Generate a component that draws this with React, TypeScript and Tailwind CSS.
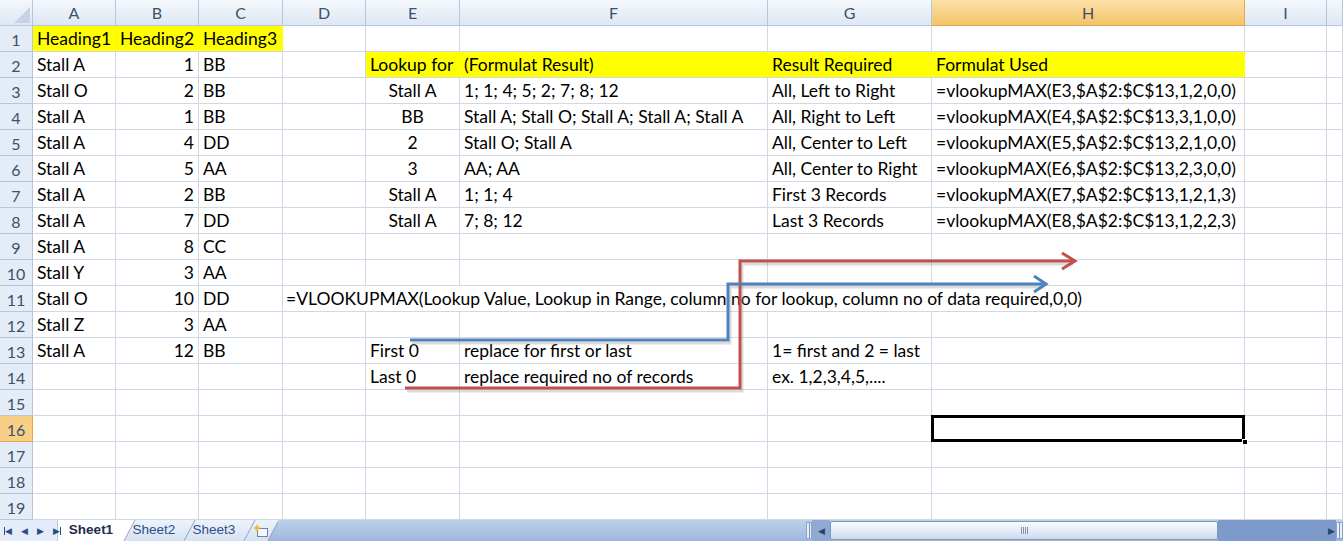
import React from "react";

type Cell = { t: string; al?: "l" | "r" | "c"; y?: boolean };
type Row = Record<string, Cell>;

const COLS = ["A", "B", "C", "D", "E", "F", "G", "H", "I", "J"];

const s = (t: string, al: "l" | "r" | "c" = "l", y = false): Cell => ({ t, al, y });

const rows: Row[] = [
    { A: s("Heading1", "l", true), B: s("Heading2", "l", true), C: s("Heading3", "l", true) },
    { A: s("Stall A"), B: s("1", "r"), C: s("BB"), E: s("Lookup for", "l", true), F: s("(Formulat Result)", "l", true), G: s("Result Required", "l", true), H: s("Formulat Used", "l", true) },
    { A: s("Stall O"), B: s("2", "r"), C: s("BB"), E: s("Stall A", "c"), F: s("1; 1; 4; 5; 2; 7; 8; 12"), G: s("All, Left to Right"), H: s("=vlookupMAX(E3,$A$2:$C$13,1,2,0,0)") },
    { A: s("Stall A"), B: s("1", "r"), C: s("BB"), E: s("BB", "c"), F: s("Stall A; Stall O; Stall A; Stall A; Stall A"), G: s("All, Right to Left"), H: s("=vlookupMAX(E4,$A$2:$C$13,3,1,0,0)") },
    { A: s("Stall A"), B: s("4", "r"), C: s("DD"), E: s("2", "c"), F: s("Stall O; Stall A"), G: s("All, Center to Left"), H: s("=vlookupMAX(E5,$A$2:$C$13,2,1,0,0)") },
    { A: s("Stall A"), B: s("5", "r"), C: s("AA"), E: s("3", "c"), F: s("AA; AA"), G: s("All, Center to Right"), H: s("=vlookupMAX(E6,$A$2:$C$13,2,3,0,0)") },
    { A: s("Stall A"), B: s("2", "r"), C: s("BB"), E: s("Stall A", "c"), F: s("1; 1; 4"), G: s("First 3 Records"), H: s("=vlookupMAX(E7,$A$2:$C$13,1,2,1,3)") },
    { A: s("Stall A"), B: s("7", "r"), C: s("DD"), E: s("Stall A", "c"), F: s("7; 8; 12"), G: s("Last 3 Records"), H: s("=vlookupMAX(E8,$A$2:$C$13,1,2,2,3)") },
    { A: s("Stall A"), B: s("8", "r"), C: s("CC") },
    { A: s("Stall Y"), B: s("3", "r"), C: s("AA") },
    { A: s("Stall O"), B: s("10", "r"), C: s("DD") },
    { A: s("Stall Z"), B: s("3", "r"), C: s("AA") },
    { A: s("Stall A"), B: s("12", "r"), C: s("BB"), E: s("First 0"), F: s("replace for first or last"), G: s("1= first and 2 = last") },
    { E: s("Last 0"), F: s("replace required no of records"), G: s("ex. 1,2,3,4,5,....") },
    {},
    {},
    {},
    {},
    {},
];

const font = "font-['Lato','Open_Sans',sans-serif]";

function ColHead({ label, active }: { label: string; active?: boolean }) {
    return (
        <div
            className={`flex items-center justify-center border-r border-b text-[16px] text-[#3f5069] ${
                active
                    ? "bg-gradient-to-b from-[#fbe0a8] to-[#f4c468] border-[#e1a94a]"
                    : "bg-gradient-to-b from-[#f5f8fc] to-[#dde7f3] border-[#b6c7dd]"
            }`}
        >
            {label}
        </div>
    );
}

function RowHead({ n, active }: { n: number; active?: boolean }) {
    return (
        <div
            className={`flex items-center justify-center pt-[2px] border-r border-b text-[16px] text-[#3f5069] ${
                active ? "bg-[#f7cf86] border-[#e1a94a]" : "bg-[#e4ecf7] border-[#b6c7dd]"
            }`}
        >
            {n}
        </div>
    );
}

function DataCell({ c, selected }: { c?: Cell; selected?: boolean }) {
    const align = c?.al === "r" ? "justify-end" : c?.al === "c" ? "justify-center" : "justify-start";
    return (
        <div
            className={`relative flex items-center px-[4px] pt-[2px] whitespace-nowrap text-[17.5px] text-black ${align} ${
                selected ? "overflow-visible z-10" : "overflow-hidden"
            } ${c?.y ? "bg-[#ffff00] border-b border-b-[#d0d7e5]" : "border-r border-b border-[#d0d7e5]"}`}
        >
            {c?.t}
            {selected && (
                <>
                    <div className="absolute left-[-1px] top-[-1px] right-[-1px] bottom-[-1px] border-[3px] border-black" />
                    <div className="absolute right-[-4px] bottom-[-4px] w-[6px] h-[6px] bg-black border border-white" />
                </>
            )}
        </div>
    );
}

function Tab({ label, active, w }: { label: string; active?: boolean; w: string }) {
    return (
        <div className={`relative flex items-center justify-center ${w}`}>
            <div
                className={`absolute inset-y-0 left-[-6px] right-[-6px] -skew-x-[28deg] border-r border-[#8ea5c6] ${
                    active ? "bg-white" : "bg-gradient-to-b from-[#eef3fa] to-[#d6e2f2]"
                }`}
            />
            <span
                className={`relative font-['Liberation_Sans','Arial',sans-serif] text-[13.5px] ${
                    active ? "font-bold text-[#1c2e4a]" : "text-[#2c4f8c]"
                }`}
            >
                {label}
            </span>
        </div>
    );
}

function TabBar() {
    return (
        <div className="flex h-[21px] bg-gradient-to-b from-[#bcd0ea] to-[#9db7dc] text-[13px]">
            <div className="relative z-10 flex items-center gap-[9px] w-[58px] pl-[4px] bg-[#e3ecf8] text-[#2d4e82] text-[9px] border-r border-[#b9c9de]">
                <span className="flex items-center"><span className="w-[1px] h-[8px] bg-[#2d4e82]" />◀</span>
                <span>◀</span>
                <span>▶</span>
                <span className="flex items-center">▶<span className="w-[1px] h-[8px] bg-[#2d4e82]" /></span>
            </div>
            <div className="flex flex-row-reverse overflow-hidden w-[220px]">
                <div className="relative flex items-center justify-center w-[34px]">
                    <div className="absolute inset-y-0 left-[-6px] right-[4px] -skew-x-[28deg] border-r border-[#8ea5c6] bg-gradient-to-b from-[#eef3fa] to-[#d6e2f2]" />
                    <svg width="18" height="14" viewBox="0 0 18 14" className="relative">
                        <rect x="5.5" y="4.5" width="10" height="8" fill="#f4f7fb" stroke="#6c84a8" />
                        <circle cx="5" cy="4" r="2.2" fill="#f6c342" />
                        <path d="M5 0.5v7M1.5 4h7" stroke="#f0b52c" strokeWidth="1" />
                    </svg>
                </div>
                <Tab label="Sheet3" w="w-[60px]" />
                <Tab label="Sheet2" w="w-[60px]" />
                <Tab label="Sheet1" w="w-[66px]" active />
            </div>
            <div className="flex-1" />
            <div className="w-[6px] my-[2px] bg-[#e8eef7] border border-[#8aa3c6] flex justify-center">
                <div className="w-[1px] h-full bg-[#7d93b4]" />
            </div>
            <div className="w-[18px] flex items-center justify-center bg-[#8fa9d2] text-[#29446e] text-[9px]">◀</div>
            <div className="w-[388px] my-[1px] rounded-[2px] border border-[#7e96b8] bg-gradient-to-b from-[#f8fafd] via-[#e6edf6] to-[#cbd8ea] flex items-center justify-center gap-[1px]">
                {[0, 1, 2, 3].map((i) => (
                    <div key={i} className="w-[1px] h-[7px] bg-[#7d93b4]" />
                ))}
            </div>
            <div className="w-[108px] bg-[#7c9bcb]" />
            <div className="w-[10px] flex items-center justify-center bg-[#7c9bcb] text-[#29446e] text-[9px]">▶</div>
            <div className="w-[7px] my-[2px] bg-[#e8eef7] border border-[#8aa3c6] flex justify-center">
                <div className="w-[1px] h-full bg-[#7d93b4]" />
            </div>
        </div>
    );
}

export default function App() {
    return (
        <div className={`relative w-[1343px] h-[541px] overflow-hidden bg-white ${font}`}>
            <div className="grid grid-cols-[33px_83px_83px_84px_83px_94px_308px_164px_313px_82px_16px] grid-rows-[26px] auto-rows-[26px]">
                <div className="border-r border-b border-[#b6c7dd] bg-gradient-to-b from-[#f5f8fc] to-[#dde7f3] flex items-end justify-end p-[2px]">
                    <div className="w-0 h-0 border-l-[16px] border-l-transparent border-b-[16px] border-b-[#c5d3e5]" />
                </div>
                {COLS.map((c) => (
                    <ColHead key={c} label={c === "J" ? "" : c} active={c === "H"} />
                ))}
                {rows.map((r, i) => {
                    const n = i + 1;
                    if (n === 11) {
                        return (
                            <React.Fragment key={n}>
                                <RowHead n={n} />
                                <DataCell c={r.A} />
                                <DataCell c={r.B} />
                                <DataCell c={r.C} />
                                <div className="col-span-5 flex items-center px-[3px] pt-[2px] whitespace-nowrap text-[17.5px] text-black border-r border-b border-[#d0d7e5]">
                                    =VLOOKUPMAX(Lookup Value, Lookup in Range, column no for lookup, column no of data required,0,0)
                                </div>
                                <DataCell />
                                <DataCell />
                            </React.Fragment>
                        );
                    }
                    return (
                        <React.Fragment key={n}>
                            <RowHead n={n} active={n === 16} />
                            {COLS.map((c) => (
                                <DataCell key={c} c={r[c]} selected={n === 16 && c === "H"} />
                            ))}
                        </React.Fragment>
                    );
                })}
            </div>
            <svg className="absolute inset-0 pointer-events-none" width="1343" height="541">
                <g fill="none" strokeWidth="3" strokeLinejoin="miter">
                    <path d="M406 389H741V262H1072" stroke="#9a9a9a" strokeOpacity="0.35" transform="translate(1 2)" />
                    <path d="M411 341H729V285H1043" stroke="#9a9a9a" strokeOpacity="0.35" transform="translate(1 2)" />
                    <path d="M405 388H740V261H1072" stroke="#c0504d" />
                    <path d="M1062 253L1075 261L1062 269" stroke="#c0504d" />
                    <path d="M410 340H728V284H1043" stroke="#4f81bd" />
                    <path d="M1034 276L1046 284L1034 292" stroke="#4f81bd" />
                </g>
            </svg>
            <TabBar />
        </div>
    );
}
